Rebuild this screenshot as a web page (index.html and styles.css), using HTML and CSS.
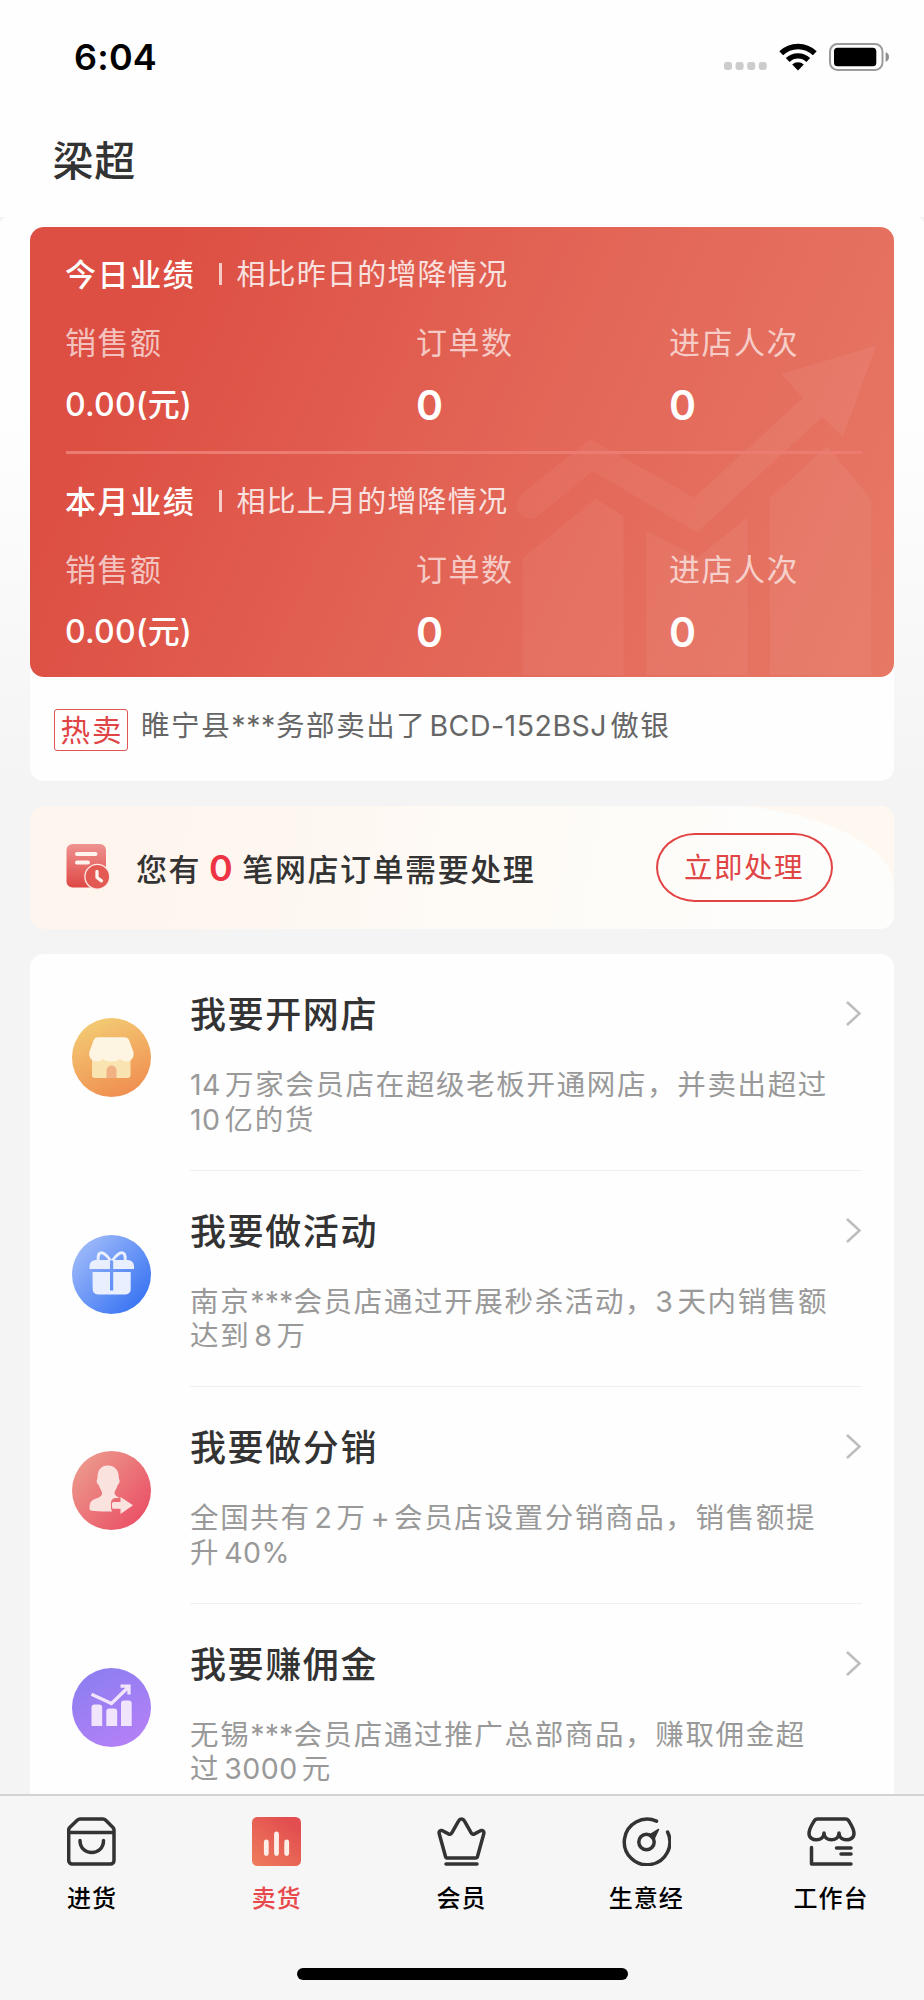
FILE: index.html
```html
<!DOCTYPE html>
<html lang="zh-CN">
<head>
<meta charset="utf-8">
<title>卖货</title>
<link rel="stylesheet" href="styles.css">
</head>
<body>
<div class="app">
  <header class="header">
    <div class="status">
      <span class="time">6:04</span>
      <div class="status-icons">
        <svg class="dots" width="43" height="8" viewBox="0 0 43 8" fill="#ccc"><rect width="8" height="8" rx="2.4"/><rect x="11.6" width="8" height="8" rx="2.4"/><rect x="23.2" width="8" height="8" rx="2.4"/><rect x="34.8" width="8" height="8" rx="2.4"/></svg>
        <svg class="wifi" width="38" height="28" viewBox="0 0 38 28"><g fill="none" stroke="#000" stroke-width="5.4"><path d="M2.2 10.3a24.2 24.2 0 0 1 33.6 0"/><path d="M8.7 17a15 15 0 0 1 20.6 0"/></g><path d="M13.2 21.4a8.6 8.6 0 0 1 11.6 0L19 27.4z"/></svg>
        <svg class="battery" width="61" height="28" viewBox="0 0 61 28"><rect x="1" y="1" width="52.5" height="26" rx="7.5" fill="none" stroke="#9b9b9b" stroke-width="2"/><rect x="5" y="4.8" width="42.3" height="18.4" rx="3.5"/><path d="M56.6 9.3c2.5.8 3.4 2.6 3.4 4.7s-.9 3.900-3.400 4.700z" fill="#8e8e8e"/></svg>
      </div>
    </div>
    <h1 class="name">梁超</h1>
  </header>

  <main class="panel">
    <section class="summary">
      <div class="hero">
        <svg class="hero-art" width="462" height="450" viewBox="0 0 1386 1350">
          <defs>
            <linearGradient id="art" x1="0" y1="0" x2="1" y2="0"><stop offset="0" stop-color="#fff" stop-opacity=".04"/><stop offset="1" stop-color="#fff" stop-opacity=".06"/></linearGradient>
          </defs>
          <g transform="translate(90 -51)">
            <path fill="url(#art)" d="M385 688 697 863 1023 563 958 493 1243 406 1143 680 1081 620 705 967 392 783 232 915A38 38 0 0 1 176 854Z"/>
            <g fill="#fff" fill-opacity=".05"><path d="M182 1045 402 866 485 920V1396H182z"/><path d="M553 962 708 1042 857 922V1396H553z"/><path d="M924 865 1096 709 1227 868V1396H924z"/></g>
          </g>
        </svg>
        <div class="stats">
          <div class="stats-head"><strong>今日业绩</strong><i class="bar"></i><span>相比昨日的增降情况</span></div>
          <div class="grid labels"><span>销售额</span><span>订单数</span><span>进店人次</span></div>
          <div class="grid values"><span class="money">0.00(元)</span><span>0</span><span>0</span></div>
        </div>
        <div class="rule"></div>
        <div class="stats">
          <div class="stats-head"><strong>本月业绩</strong><i class="bar"></i><span>相比上月的增降情况</span></div>
          <div class="grid labels"><span>销售额</span><span>订单数</span><span>进店人次</span></div>
          <div class="grid values"><span class="money">0.00(元)</span><span>0</span><span>0</span></div>
        </div>
      </div>
      <div class="hot"><span class="tag">热卖</span><span class="hot-text">睢宁县<span class="mask">***</span>务部卖出了<span class="model">BCD-152BSJ</span>傲银</span></div>
    </section>

    <section class="notice">
      <svg class="notice-art" width="150" height="124" viewBox="0 0 150 124"><path d="M0 0C75 7 150 38 150 82V0z" fill="#fef8f0"/></svg>
      <svg class="order-icon" width="44" height="46" viewBox="0 0 44 46">
        <defs><linearGradient id="ord" x1="0" y1="0" x2="0" y2="1"><stop offset="0" stop-color="#ee9291"/><stop offset="1" stop-color="#df4844"/></linearGradient></defs>
        <rect x=".5" width="39.500" height="43.500" rx="6" fill="url(#ord)"/>
        <path d="M11 10h18.500M11 18.500h11" stroke="#fff3ee" stroke-width="4" stroke-linecap="round"/>
        <circle cx="31.300" cy="32.700" r="12.400" fill="#e35a55" stroke="#fdece7" stroke-width="1.300"/>
        <path d="M31 27.500v6l4.500 3.300" fill="none" stroke="#fff3ee" stroke-width="3.300" stroke-linecap="round" stroke-linejoin="round"/>
      </svg>
      <p class="notice-text">您有<b>0</b>笔网店订单需要处理</p>
      <button class="action">立即处理</button>
    </section>

    <section class="list">
      <article class="item">
        <svg class="badge-icon" width="79" height="79" viewBox="0 0 79 79">
          <defs><linearGradient id="g1" x1=".3" y1="0" x2=".7" y2="1"><stop offset="0" stop-color="#f3cb73"/><stop offset="1" stop-color="#f08d50"/></linearGradient></defs>
          <circle cx="39.500" cy="39.500" r="39.500" fill="url(#g1)"/>
          <path d="M20 38h38.500v19a3 3 0 0 1-3 3H23a3 3 0 0 1-3-3z" fill="#f9e3b1"/>
          <path d="M34.500 60v-7.500a5 5 0 0 1 10 0V60z" fill="#f1b283"/>
          <path d="M25.500 19.300h27.500q3 0 4 2.600l4.300 11.600c1.500 5-1.800 10-6.800 10-3 0-5-1-6.500-2.700-1.500 1.700-4.500 2.700-8.500 2.700s-7-1-8.500-2.700c-1.500 1.700-3.500 2.700-6.500 2.700-5 0-8.500-5-7-10l4.200-11.600q1-2.600 3.800-2.600z" fill="#fdf5e2"/>
        </svg>
        <div class="item-body"><h2>我要开网店</h2><p><span class="num first">14</span>万家会员店在超级老板开通网店，并卖出超过<br><span class="num first">10</span>亿的货</p></div>
        <svg class="chevron" width="17" height="27" viewBox="0 0 17 27"><path d="M2 2 14.500 13.500 2 25"/></svg>
      </article>
      <article class="item">
        <svg class="badge-icon" width="79" height="79" viewBox="0 0 79 79">
          <defs><linearGradient id="g2" x1=".1" y1=".15" x2=".85" y2=".85"><stop offset="0" stop-color="#9cb8f9"/><stop offset="1" stop-color="#3d77f3"/></linearGradient></defs>
          <circle cx="39.500" cy="39.500" r="39.500" fill="url(#g2)"/>
          <path d="M38.500 25.500C35 20 29 15 26.800 19.300c-1 2-.8 4-.6 5.700M40.500 25.500C44 20 50 15 52.500 19.300c1 2 .8 4 .6 5.700" fill="none" stroke="#e9effe" stroke-width="3"/>
          <path d="M23.500 25H38v9H17.500v-3a6 6 0 0 1 6-6zM41.200 25H56a6 6 0 0 1 6 6v3H41.200zM20.500 37H38v18.500h3.200V37h17.500v17.500a5 5 0 0 1-5 5h-28a5 5 0 0 1-5-5z" fill="#e9effe"/>
        </svg>
        <div class="item-body"><h2>我要做活动</h2><p>南京<span class="mask">***</span>会员店通过开展秒杀活动，<span class="num first">3</span>天内销售额<br>达到<span class="num">8</span>万</p></div>
        <svg class="chevron" width="17" height="27" viewBox="0 0 17 27"><path d="M2 2 14.500 13.500 2 25"/></svg>
      </article>
      <article class="item">
        <svg class="badge-icon" width="79" height="79" viewBox="0 0 79 79">
          <defs><linearGradient id="g3" x1=".1" y1=".15" x2=".85" y2=".85"><stop offset="0" stop-color="#ec978b"/><stop offset="1" stop-color="#ea5468"/></linearGradient></defs>
          <circle cx="39.500" cy="39.500" r="39.500" fill="url(#g3)"/>
          <path d="M35.500 14.500c7.500 0 11.300 4.800 11.300 12 0 1.200 1 2.400.8 4-.2 2-1.200 2.700-2 3.700-.8 3.500-2.600 5-3.100 7.300-.3 3 3.500 4.700 5.500 5.500H44c-3 0-5 2-5 5v4c0 2 .5 3.500 1.300 4.500-7 .3-15.500 0-20.800-.7-2-.3-2-1.500-2-3 0-5 1.500-7 5-8.500 3-1.300 8-2.500 7.500-6.800-.4-2.300-2.300-3.800-3.100-7.300-.8-1-2-1.700-2.200-3.700-.2-1.600.8-2.800.8-4 0-7.200 3.500-12 10-12z" fill="#fae2df"/>
          <path d="M41.500 51h7v-5l12.500 8.300-12.500 8.700v-5.200h-7q-1.500 0-1.500-1.500V52.500q0-1.500 1.500-1.500z" fill="#fae2df"/>
        </svg>
        <div class="item-body"><h2>我要做分销</h2><p>全国共有<span class="num">2</span>万<span class="num">+</span>会员店设置分销商品，销售额提<br>升<span class="num">40%</span></p></div>
        <svg class="chevron" width="17" height="27" viewBox="0 0 17 27"><path d="M2 2 14.500 13.500 2 25"/></svg>
      </article>
      <article class="item">
        <svg class="badge-icon" width="79" height="79" viewBox="0 0 79 79">
          <defs><linearGradient id="g4" x1=".2" y1="0" x2=".75" y2="1"><stop offset="0" stop-color="#8b7ef0"/><stop offset="1" stop-color="#b580f7"/></linearGradient></defs>
          <circle cx="39.500" cy="39.500" r="39.500" fill="url(#g4)"/>
          <path d="M19.500 58V39.500a3 3 0 0 1 3-3h4.700a3 3 0 0 1 3 3V58zM34.300 58V43.500a3 3 0 0 1 3-3h4.900a3 3 0 0 1 3 3V58zM49 58V35.500a3 3 0 0 1 3-3h4.700a3 3 0 0 1 3 3V58z" fill="#f1e5fd"/>
          <path d="M19.500 26.200 39.500 35.500 56 19.500M48.500 18.200H57V26.500" fill="none" stroke="#f1e5fd" stroke-width="3.300"/>
        </svg>
        <div class="item-body"><h2>我要赚佣金</h2><p>无锡<span class="mask">***</span>会员店通过推广总部商品，赚取佣金超<br>过<span class="num">3000</span>元</p></div>
        <svg class="chevron" width="17" height="27" viewBox="0 0 17 27"><path d="M2 2 14.500 13.500 2 25"/></svg>
      </article>
    </section>
  </main>

  <nav class="tabs">
    <div class="tab-row">
      <a class="tab"><svg width="49" height="49" viewBox="0 0 49 49"><path d="M1.700 15V43.500a3.500 3.500 0 0 0 3.500 3.500H43.500a3.500 3.500 0 0 0 3.500-3.500V13q0-1.500-1-2.500L38.500 3Q37.500 2 36 2H13Q11.500 2 10.500 3L2.700 10.500q-1 1-1 2.500zM2 15.500H47M13 23.500c0 16 23.500 16 23.500 0"/></svg>进货</a>
      <a class="tab active"><svg width="49" height="49" viewBox="0 0 49 49"><defs><linearGradient id="tb" x1=".1" y1="1" x2=".8" y2=".1"><stop offset="0" stop-color="#ee7b5b"/><stop offset="1" stop-color="#e24d4f"/></linearGradient></defs><rect width="49" height="49" rx="5.500" fill="url(#tb)" stroke="none"/><path d="M14.300 25v11.500M24.500 17v19.500M34.700 25v11.500" stroke="#fdeeea" stroke-width="4.800"/></svg>卖货</a>
      <a class="tab"><svg width="49" height="49" viewBox="0 0 49 49"><path d="M8.500 39.500 2.300 17c-.8-3 1-4 3.200-3.300l6 3.200c1.400.8 2.600.3 3.300-1l6.700-11.800c1.400-2.700 4.600-2.700 6 0l6.700 11.800c.7 1.300 1.900 1.800 3.300 1l6-3.200c2.200-.7 4 .3 3.200 3.300L40.500 39.500q-.4 1.500-2 1.500H10.500q-1.600 0-2-1.500zM9 47H40"/></svg>会员</a>
      <a class="tab"><svg width="49" height="49" viewBox="0 0 49 49"><path d="M34.500 4.200A22.800 22.800 0 1 0 45.600 15"/><circle cx="24.500" cy="25" r="7.700"/><path d="M27 18.500 36.500 12.500 31.500 23z" fill="#333" stroke-width="1.500"/></svg>生意经</a>
      <a class="tab"><svg width="49" height="49" viewBox="0 0 49 49"><path d="M10.500 2h28q2.300 0 3.300 2C45 9 47 12 47 16.500 47 25 32 25 32 16 32 25 17 25 17 16 17 25 2 25 2 16.500 2 12 4 9 7.200 4q1-2 3.300-2zM4.500 30.500V47H44M29.500 31H44M34 37H44"/></svg>工作台</a>
    </div>
    <div class="home"></div>
  </nav>
</div>
</body>
</html>
```

FILE: styles.css
```css
* { box-sizing: border-box; margin: 0; padding: 0; }
body { background: #f4f4f4; font-family: Inter, "Noto Sans CJK SC", sans-serif; color: #333; }
svg { display: block; flex: none; }
.app { width: 924px; height: 2000px; overflow: hidden; display: flex; flex-direction: column; background: #f4f4f4; }

.header { flex: none; height: 217px; background: #fefefe; }
.status { height: 114px; display: flex; align-items: center; justify-content: space-between; padding: 0 34px 0 74px; }
.time { font-size: 36px; font-weight: 600; color: #000; letter-spacing: .2px; }
.status-icons { display: flex; align-items: center; }
.dots { margin: 18px 12px 0 0; }
.wifi { margin-right: 12px; }
.name { padding-left: 52.500px; font-size: 41px; line-height: 94px; font-weight: 500; letter-spacing: .7px; }

.panel { flex: 1; min-height: 0; overflow: hidden; padding: 10px 30px 0; border-radius: 8px 8px 0 0; background: linear-gradient(#fefefe 200px, #f4f4f4 570px); }
.summary { height: 554px; border-radius: 14px; background: #fefefe; }
.hero { position: relative; height: 450px; padding: 27px 32px 0 35px; border-radius: 14px; overflow: hidden; background: linear-gradient(114deg, #dd4f43 14%, #e36758 58%, #e77866); color: #fff; }
.hero-art { position: absolute; right: 0; top: 0; }
.stats { position: relative; }
.stats-head { display: flex; align-items: center; height: 40px; font-size: 29px; line-height: 41px; letter-spacing: 1.2px; }
.stats-head strong { font-size: 31px; font-weight: 500; letter-spacing: 1.6px; }
.stats-head span { opacity: .82; }
.bar { width: 2.500px; height: 22px; margin: 0 14.500px 0 24px; background: #fff; opacity: .7; }
.grid { display: grid; grid-template-columns: 351px 253px 1fr; }
.labels { margin-top: 31px; font-size: 31px; line-height: 36px; letter-spacing: 1.500px; color: rgba(255, 255, 255, .68); }
.values { margin-top: 22px; height: 44px; align-items: center; font-size: 41px; line-height: 44px; font-weight: 600; }
.money { font-size: 32px; font-weight: 500; letter-spacing: .2px; }
.rule { position: relative; height: 2.500px; margin: 24px 0 27.500px 1px; background: #ec7c72; }

.hot { display: flex; padding: 32px 24px 0; font-size: 28.500px; color: #666; }
.tag { width: 74px; height: 42px; border: 1.500px solid #e25555; border-radius: 3px; line-height: 41px; padding-left: 5.500px; font-size: 29.500px; letter-spacing: 2px; color: #e04444; }
.hot-text { margin-left: 13px; line-height: 33px; letter-spacing: 1.600px; }
.mask { letter-spacing: .1px; }
.hot-text .mask { letter-spacing: .6px; }
.model { margin: 0 3px 0 3px; letter-spacing: .5px; }

.notice { position: relative; margin-top: 24.500px; height: 123.500px; border-radius: 14px; overflow: hidden; display: flex; align-items: center; padding: 0 61.500px 0 36px; background: linear-gradient(100deg, #fef5ee 15%, #fefaf5 50%, #fdfdfb 85%); }
.notice-art { position: absolute; right: 0; top: 0; }
.notice-text { margin: 3px 0 0 26px; font-size: 31px; line-height: 40px; font-weight: 500; letter-spacing: 1.550px; white-space: nowrap; }
.notice-text b { margin: 0 9.500px 0 8px; font-size: 36px; font-weight: 600; letter-spacing: 0; color: #ee3344; }
.action { position: relative; margin-left: auto; width: 177px; height: 69px; padding-top: 1.500px; border: 2px solid #e24444; border-radius: 39px / 34.500px; background: transparent; font: 28.500px/60px Inter, "Noto Sans CJK SC", sans-serif; letter-spacing: 1.500px; color: #e04444; }

.list { margin-top: 25px; border-radius: 14px; background: #fefefe; }
.item { display: flex; height: 216.600px; padding-left: 41.500px; }
.badge-icon { margin-top: 64px; }
.item-body { position: relative; width: 672px; margin-left: 39.500px; border-bottom: 1.500px solid #efefef; }
.item-body h2 { margin-top: 38px; font-size: 36px; line-height: 46px; font-weight: 500; letter-spacing: 1.600px; }
.item-body p { margin-top: 30px; font-size: 28.500px; line-height: 34.600px; letter-spacing: 1.650px; color: #999; white-space: nowrap; }
.num { margin: 0 4px; letter-spacing: .5px; }
.num.first { margin-left: 0; }
.chevron { margin: 46px 0 0 -17px; fill: none; stroke: #bdbdbd; stroke-width: 2.500px; position: relative; }

.tabs { flex: none; height: 206px; border-top: 2px solid #d3d3d3; background: #f6f6f6; }
.tab-row { display: grid; grid-template-columns: repeat(5, 1fr); padding-top: 21px; height: 172px; }
.tab { display: flex; flex-direction: column; align-items: center; gap: 17.500px; padding-right: 1px; font-size: 24px; line-height: 30px; font-weight: 500; letter-spacing: 1px; color: #000; }
.tab svg { fill: none; stroke: #333; stroke-width: 3.500px; stroke-linecap: round; stroke-linejoin: round; }
.tab.active { color: #e8494c; }
.home { width: 331px; height: 12px; margin: 0 auto; border-radius: 6px; background: #000; }
```
